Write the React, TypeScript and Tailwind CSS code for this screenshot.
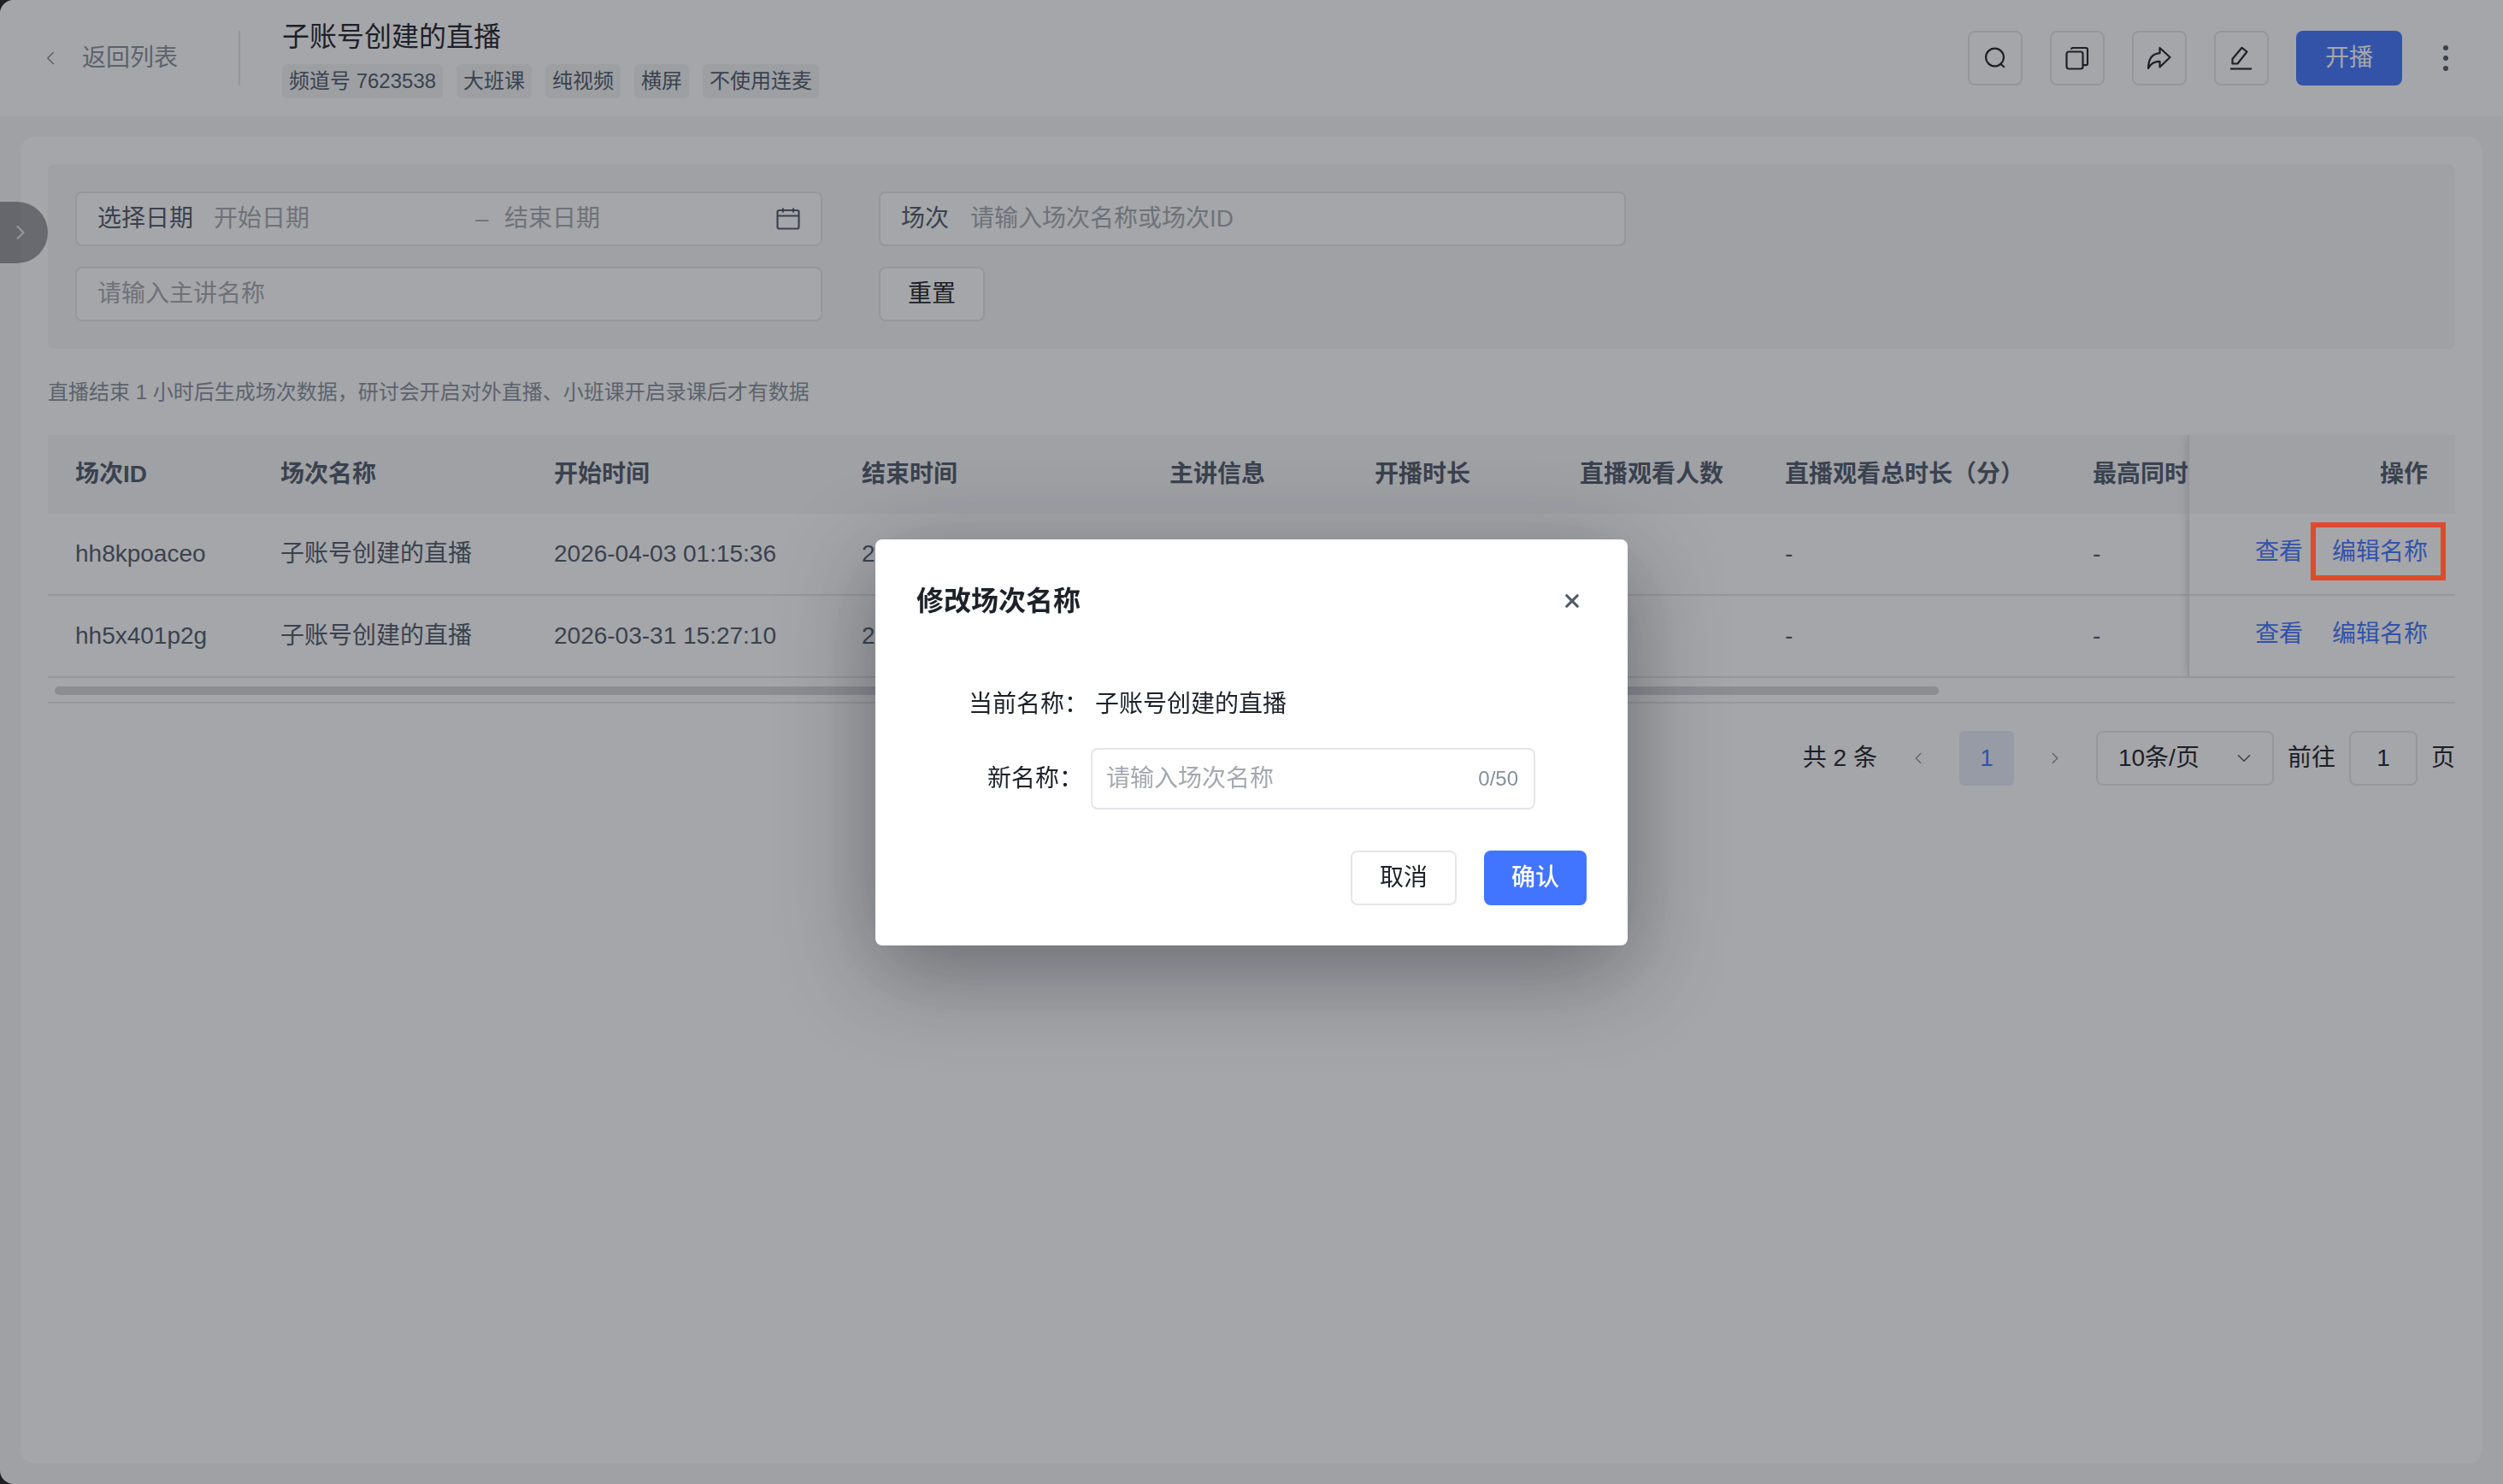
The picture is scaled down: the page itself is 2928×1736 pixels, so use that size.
import React from "react";
import { ChevronDown, ChevronLeft, ChevronRight, X } from "lucide-react";

const FONT = "font-['Liberation_Sans','Noto_Sans_CJK_SC',sans-serif]";

const tags = ["频道号 7623538", "大班课", "纯视频", "横屏", "不使用连麦"];

const columns = [
  { title: "场次ID", width: "w-[240px]" },
  { title: "场次名称", width: "w-[320px]" },
  { title: "开始时间", width: "w-[360px]" },
  { title: "结束时间", width: "w-[360px]" },
  { title: "主讲信息", width: "w-[240px]" },
  { title: "开播时长", width: "w-[240px]" },
  { title: "直播观看人数", width: "w-[240px]" },
  { title: "直播观看总时长（分）", width: "w-[360px]" },
  { title: "最高同时在线人数", width: "w-[360px]" },
];

const rows = [
  ["hh8kpoaceo", "子账号创建的直播", "2026-04-03 01:15:36", "2026-04-03 02:15:36", "-", "-", "-", "-", "-"],
  ["hh5x401p2g", "子账号创建的直播", "2026-03-31 15:27:10", "2026-03-31 16:27:10", "-", "-", "-", "-", "-"],
];

const SearchIcon = () => (
  <svg viewBox="0 0 28 28" className="h-7 w-7" fill="none" stroke="#1d2129" strokeWidth="2.2">
    <circle cx="13.5" cy="13" r="10.4" />
    <path d="M20.5 21l3.5 3" strokeLinecap="square" />
  </svg>
);

const CopyIcon = () => (
  <svg viewBox="0 0 28 28" className="h-7 w-7" fill="none" stroke="#1d2129" strokeWidth="2.2">
    <rect x="1.5" y="6.5" width="19" height="20" rx="2.5" />
    <path d="M7 3.8c0-1 .8-1.8 1.8-1.8H24c1.2 0 2 .8 2 2v16.5c0 1-.7 1.7-1.6 1.7h-3.6" />
  </svg>
);

const ShareIcon = () => (
  <svg viewBox="0 0 28 28" className="h-7 w-7" fill="none" stroke="#1d2129" strokeWidth="2.2" strokeLinejoin="round">
    <path d="M14.5 2v6.2C6 8.800 1.200 14.500 1 26c2.800-6 6.500-8.300 13.500-8.200V24.500L26.500 13z" />
  </svg>
);

const EditIcon = () => (
  <svg viewBox="0 0 28 28" className="h-7 w-7" fill="none" stroke="#1d2129" strokeWidth="2.2">
    <path d="M3.500 20.500v-5.500L14.500 1.800l6 4.700L9.500 20.500z" strokeLinejoin="round" />
    <path d="M1 26.500h25" />
  </svg>
);

const CalendarIcon = () => (
  <svg viewBox="0 0 28 26" className="h-[26px] w-[28px]" fill="none" stroke="#4e5969" strokeWidth="2.200">
    <rect x="1.500" y="3" width="25" height="21.500" rx="2" />
    <path d="M1.500 9.500h25M8 .5v5M20 .5v5" />
  </svg>
);

const IconButton = ({ children }: { children: React.ReactNode }) => (
  <button
    type="button"
    className="flex h-16 w-16 items-center justify-center rounded-lg border-2 border-[#e5e6eb] bg-white"
  >
    {children}
  </button>
);

const FilterBox = ({ children }: { children: React.ReactNode }) => (
  <div className="flex h-16 w-[874px] items-center rounded-lg border-2 border-[#e5e6eb] bg-white text-[28px]">
    {children}
  </div>
);

const FilterInput = ({ placeholder, className }: { placeholder: string; className: string }) => (
  <input
    placeholder={placeholder}
    className={`bg-transparent text-[28px] outline-none placeholder:text-[#a4a8b0] ${className}`}
  />
);

export default function App() {
  return (
    <div className={`h-[1736px] w-full overflow-hidden bg-[#202124] ${FONT}`}>
      <div className="relative h-full overflow-hidden rounded-l-[16px] bg-[#f6f7f9]">
        {/* header */}
        <header className="flex h-[136px] items-center bg-white pl-[46px] pr-[64px]">
          <ChevronLeft className="h-[26px] w-[26px] text-[#86909c]" strokeWidth={1.500} />
          <span className="ml-[24px] w-[112px] text-[28px] text-[#86909c]">返回列表</span>
          <div className="ml-[71px] h-16 w-0.5 bg-[#e5e6eb]" />
          <div className="ml-[49px] flex flex-col">
            <h1 className="h-[44px] text-[32px] leading-[44px] text-[#1d2129]">子账号创建的直播</h1>
            <div className="mt-[10px] flex gap-4">
              {tags.map((t) => (
                <span key={t} className="h-10 rounded-md bg-[#f2f3f5] px-2 text-[24px] leading-10 text-[#4e5969]">
                  {t}
                </span>
              ))}
            </div>
          </div>
          <div className="ml-auto flex items-center gap-8">
            <IconButton><SearchIcon /></IconButton>
            <IconButton><CopyIcon /></IconButton>
            <IconButton><ShareIcon /></IconButton>
            <IconButton><EditIcon /></IconButton>
            <button type="button" className="h-16 w-[124px] rounded-lg bg-[#4275ff] text-[28px] text-white">
              开播
            </button>
            <div className="ml-[16px] flex flex-col gap-1.5">
              <span className="h-1.5 w-1.5 rounded-full bg-[#4e5969]" />
              <span className="h-1.5 w-1.5 rounded-full bg-[#4e5969]" />
              <span className="h-1.5 w-1.5 rounded-full bg-[#4e5969]" />
            </div>
          </div>
        </header>

        {/* page body */}
        <main className="px-6 pt-6">
          <section className="h-[1552px] rounded-[16px] bg-white px-8 pt-8">
            <div className="flex flex-wrap gap-x-[66px] gap-y-6 rounded-lg bg-[#f6f7f9] p-8">
              <FilterBox>
                <span className="ml-6 w-[136px] shrink-0 text-[#4e5969]">选择日期</span>
                <FilterInput placeholder="开始日期" className="w-[306px]" />
                <span className="w-[34px] text-[#a4a8b0]">–</span>
                <FilterInput placeholder="结束日期" className="w-[318px]" />
                <CalendarIcon />
              </FilterBox>
              <FilterBox>
                <span className="ml-6 w-[81px] shrink-0 text-[#4e5969]">场次</span>
                <FilterInput placeholder="请输入场次名称或场次ID" className="flex-1" />
              </FilterBox>
              <FilterBox>
                <FilterInput placeholder="请输入主讲名称" className="ml-6 flex-1" />
              </FilterBox>
              <button
                type="button"
                className="h-16 w-[124px] rounded-lg border-2 border-[#e5e6eb] bg-white text-[28px] text-[#1d2129]"
              >
                重置
              </button>
            </div>

            <p className="mt-[33px] text-[24px] leading-9 text-[#86909c]">
              直播结束 1 小时后生成场次数据，研讨会开启对外直播、小班课开启录课后才有数据
            </p>

            {/* table */}
            <div className="mt-8 flex text-[#4e5969]">
              <div className="min-w-0 flex-1 overflow-hidden">
                <div className="flex h-[92px] w-[2776px] items-center bg-[#f6f7f9] text-[28px] font-bold">
                  {columns.map((c) => (
                    <div key={c.title} className={`${c.width} shrink-0 whitespace-nowrap pl-8`}>
                      {c.title}
                    </div>
                  ))}
                </div>
                {rows.map((r) => (
                  <div key={r[0]} className="flex h-[96px] w-[2776px] items-center border-b-2 border-[#e5e6eb] text-[28px]">
                    {r.map((cell, i) => (
                      <div key={i} className={`${columns[i].width} shrink-0 whitespace-nowrap pl-8`}>
                        {cell}
                      </div>
                    ))}
                  </div>
                ))}
              </div>
              <div className="w-[313px] shrink-0 border-l-2 border-[#dfe0e5] shadow-[-6px_0_8px_-4px_rgba(0,0,0,0.12)]">
                <div className="flex h-[92px] items-center justify-end bg-[#f6f7f9] pr-8 text-[28px] font-bold">操作</div>
                {rows.map((r) => (
                  <div
                    key={r[0]}
                    className="flex h-[96px] items-center justify-end gap-[34px] border-b-2 border-[#e5e6eb] pb-1 pr-8 text-[28px] text-[#4275ff]"
                  >
                    <span>查看</span>
                    <span>编辑名称</span>
                  </div>
                ))}
              </div>
            </div>

            {/* table scrollbar */}
            <div className="h-[30px] border-b-2 border-[#e5e6eb] pl-2 pt-[10px]">
              <div className="h-2.5 w-[2204px] rounded-full bg-[#d5d6da]" />
            </div>

            {/* pagination */}
            <div className="mt-[32px] flex items-center justify-end gap-4 text-[28px] text-[#1d2129]">
              <span>共 2 条</span>
              <span className="flex h-16 w-16 items-center justify-center text-[#86909c]">
                <ChevronLeft className="h-[22px] w-[22px]" strokeWidth={1.500} />
              </span>
              <span className="flex h-16 w-16 items-center justify-center rounded-md bg-[#e8edfb] text-[#4275ff]">1</span>
              <span className="flex h-16 w-16 items-center justify-center text-[#86909c]">
                <ChevronRight className="h-[22px] w-[22px]" strokeWidth={1.500} />
              </span>
              <span className="flex h-16 w-[208px] items-center justify-between rounded-lg border-2 border-[#e5e6eb] pl-6 pr-5">
                10条/页
                <ChevronDown className="h-[26px] w-[26px] text-[#4e5969]" strokeWidth={1.500} />
              </span>
              <span>前往</span>
              <span className="flex h-16 w-20 items-center justify-center rounded-lg border-2 border-[#e5e6eb]">1</span>
              <span>页</span>
            </div>
          </section>
        </main>

        {/* drawer toggle */}
        <button
          type="button"
          className="absolute left-0 top-[236px] flex h-[72px] w-14 items-center justify-end rounded-r-full bg-[#1d2129]/45 pr-[18px]"
        >
          <ChevronRight className="h-7 w-7 text-white/70" strokeWidth={2} />
        </button>
      </div>

      {/* mask + dialog */}
      <div className="fixed inset-0 flex items-center justify-center bg-[#1e2028]/40">
        <div className="w-[880px] rounded-lg bg-white pb-[47px] pt-12 shadow-[0_28px_110px_rgba(20,22,32,0.42)]">
          <div className="flex h-12 items-center justify-between pl-12 pr-[55px]">
            <h2 className="text-[32px] font-bold text-[#1d2129]">修改场次名称</h2>
            <X className="h-5 w-5 scale-125 text-[#4e5969]" strokeWidth={3} />
          </div>
          <div className="mt-[77px] flex h-10 items-center pl-[109px] text-[28px] text-[#1d2129]">
            <span className="w-[148px] whitespace-nowrap">当前名称：</span>
            <span>子账号创建的直播</span>
          </div>
          <div className="mt-[31px] flex items-center pl-[131px] text-[28px] text-[#1d2129]">
            <span className="w-[121px] whitespace-nowrap">新名称：</span>
            <div className="flex h-[72px] w-[520px] items-center justify-between rounded-lg border-2 border-[#e5e6eb] pl-[16px] pr-[18px]">
              <input
                placeholder="请输入场次名称"
                className="w-[320px] bg-transparent text-[28px] outline-none placeholder:text-[#a4a8b0]"
              />
              <span className="text-[24px] text-[#86909c]">0/50</span>
            </div>
          </div>
          <div className="mt-12 flex justify-end gap-8 pr-12 text-[28px]">
            <button type="button" className="h-16 w-[124px] rounded-lg border-2 border-[#e5e6eb] bg-white text-[#1d2129]">
              取消
            </button>
            <button type="button" className="h-16 w-[120px] rounded-lg bg-[#4275ff] font-medium text-white">
              确认
            </button>
          </div>
        </div>
        {/* red annotation */}
        <div className="absolute left-[2703px] top-[611px] h-[68px] w-[158px] border-[6px] border-[#dd4b2f]" />
      </div>
    </div>
  );
}
